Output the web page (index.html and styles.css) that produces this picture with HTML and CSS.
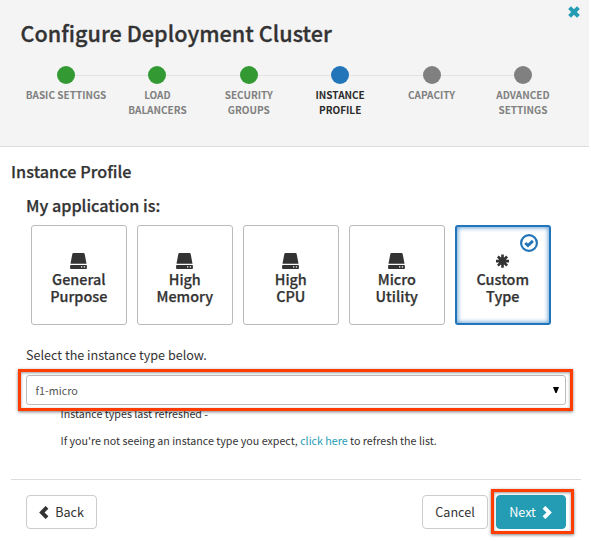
FILE: index.html
```html
<!DOCTYPE html>
<html lang="en">
<head>
<meta charset="utf-8">
<title>Configure Deployment Cluster</title>
<link rel="stylesheet" href="styles.css">
</head>
<body>
<svg class="defs" width="0" height="0" aria-hidden="true">
  <symbol id="hdd" viewBox="0 0 17 16">
    <path d="M3.3 0h10.4q.7 0 .9.7L16.5 10.800H.5L2.400.7Q2.600 0 3.300 0z"/>
    <path fill-rule="evenodd" d="M.9 12h15.200q.8 0 .8.8v2.400q0 .8-.8.8H.9q-.8 0-.8-.8v-2.400q0-.8.8-.8zM11 13.300v1.200h1.300v-1.200zM13.800 13.300v1.200h1.300v-1.200z"/>
  </symbol>
</svg>
<header class="header">
  <button class="close" aria-label="Close"><svg width="12" height="12" viewBox="0 0 12 12"><path d="M1.600 1.600l8.800 8.800M10.400 1.600l-8.800 8.800"/></svg></button>
  <h1 class="title">Configure Deployment Cluster</h1>
  <ol class="steps">
    <li class="step done">BASIC SETTINGS</li>
    <li class="step done">LOAD<br>BALANCERS</li>
    <li class="step done">SECURITY<br>GROUPS</li>
    <li class="step active">INSTANCE<br>PROFILE</li>
    <li class="step">CAPACITY</li>
    <li class="step">ADVANCED<br>SETTINGS</li>
  </ol>
</header>
<main class="content">
  <h2 class="heading">Instance Profile</h2>
  <section class="profile">
    <h3 class="question">My application is:</h3>
    <div class="cards">
      <div class="card"><svg class="icon"><use href="#hdd"/></svg><span>General<br>Purpose</span></div>
      <div class="card"><svg class="icon"><use href="#hdd"/></svg><span>High<br>Memory</span></div>
      <div class="card"><svg class="icon"><use href="#hdd"/></svg><span>High<br>CPU</span></div>
      <div class="card"><svg class="icon"><use href="#hdd"/></svg><span>Micro<br>Utility</span></div>
      <div class="card selected">
        <svg class="check" viewBox="0 0 18 18"><circle cx="9" cy="9" r="7.900"/><path d="M5.300 9l2.700 2.500 4.900-4.600"/></svg>
        <svg class="icon" viewBox="0 0 17 16"><path class="spokes" d="M8.500 1.500v13.200M2 8.100h13M3.900 3.500l9.200 9.200M13.100 3.500l-9.200 9.200"/><circle cx="8.500" cy="8.100" r="3.800"/></svg>
        <span>Custom<br>Type</span>
      </div>
    </div>
    <p class="prompt">Select the instance type below.</p>
    <div class="select highlighted"><span>f1-micro</span><svg width="6" height="6" viewBox="0 0 6 6"><path d="M0 0h6L3.600 6H2.400z"/></svg></div>
    <p class="note refreshed">Instance types last refreshed -</p>
    <p class="note">If you're not seeing an instance type you expect, <a>click here</a> to refresh the list.</p>
  </section>
  <footer class="footer">
    <button class="btn back"><svg class="chevron" viewBox="0 0 10 13"><path d="M8 1.300L2.900 6.500 8 11.700"/></svg><span>Back</span></button>
    <button class="btn cancel"><span>Cancel</span></button>
    <div class="highlighted next-wrap"><button class="btn next"><span>Next</span><svg class="chevron" viewBox="0 0 10 13"><path d="M2 1.300l5.100 5.200L2 11.700"/></svg></button></div>
  </footer>
</main>
</body>
</html>
```
FILE: styles.css
```css
* { box-sizing: border-box; }
body {
  margin: 0;
  min-height: 541px;
  background: #fff;
  color: #333;
  font-family: "Noto Sans CJK SC", "Noto Sans", sans-serif;
}
h1, h2, h3, p, ol { margin: 0; padding: 0; }
button { font-family: inherit; color: inherit; padding: 0; cursor: pointer; }
svg { display: block; flex: none; }
.defs { position: absolute; }

.header {
  position: relative;
  width: 589px;
  height: 147px;
  padding: 18px 0 0 20.500px;
  background: #f4f4f4;
  border-bottom: 1px solid #ddd;
}
.close {
  position: absolute;
  top: 6px;
  right: 9px;
  border: 0;
  background: none;
}
.close path { stroke: #239cb4; stroke-width: 4; }
.title { font-size: 21.600px; line-height: 30px; font-weight: 500; -webkit-text-stroke: .3px; letter-spacing: .03px; }
.steps { display: flex; list-style: none; margin: 18px 0 0 -.2px; }
.step {
  position: relative;
  width: 91.400px;
  text-align: center;
  font-size: 10px;
  font-weight: 700;
  line-height: 15px;
  color: #808080;
  white-space: nowrap;
}
.step::before {
  content: "";
  display: block;
  position: relative;
  z-index: 1;
  width: 18px;
  height: 18px;
  margin: 0 auto 3px;
  border-radius: 50%;
  background: #808080;
}
.step:not(:last-child)::after {
  content: "";
  position: absolute;
  top: 9px;
  left: 50%;
  width: 100%;
  height: 1px;
  background: #e2e2e2;
}
.step.done::before { background: #339933; }
.step.active { color: #2b2b2b; }
.step.active::before { background: #2275b9; }

.content { width: 581px; padding: 12px 0 0 11px; }
.heading { font-size: 16.200px; line-height: 24px; font-weight: 500; -webkit-text-stroke: .25px; letter-spacing: .05px; }
.profile { padding: 10px 0 0 15px; }
.question { font-size: 16.200px; line-height: 24px; font-weight: 500; -webkit-text-stroke: .25px; }
.cards { display: flex; gap: 10px; margin: 8px 0 0 5px; }
.card {
  position: relative;
  width: 96px;
  height: 100px;
  padding: 27px .5px 0 0;
  border: 1px solid #bbb;
  border-radius: 3px;
  text-align: center;
  font-size: 14.400px;
  font-weight: 500;
  line-height: 17px;
}
.card span { display: block; margin-top: 1px; -webkit-text-stroke: .25px; }
.icon { width: 17px; height: 16px; margin: 0 auto; fill: #333; }
.spokes { stroke: #333; stroke-width: 2.600; }
.selected { border: 2px solid #2275b9; padding-top: 26px; box-shadow: inset 0 0 4px 1px #6aa5d6; }
.check { position: absolute; top: 7px; right: 11px; width: 18px; height: 18px; fill: none; stroke: #2275b9; }
.check circle { stroke-width: 2.200; }
.check path { stroke-width: 3; }

.prompt { margin-top: 20px; font-size: 12.600px; line-height: 20px; }
.highlighted { position: relative; }
.highlighted::after {
  content: "";
  position: absolute;
  z-index: 2;
  inset: -7px -8px -7px -9px;
  border: 3px solid #ff3d00;
  box-shadow: 0 1px 3px rgba(0,0,0,.5), inset 0 1px 3px rgba(0,0,0,.4);
  pointer-events: none;
}
.select {
  display: flex;
  align-items: center;
  justify-content: space-between;
  width: 540px;
  height: 30px;
  margin-top: 10px;
  padding: 0 6px 0 8.500px;
  border: 1px solid #bbb;
  border-radius: 3px;
  font-size: 10.800px;
  line-height: 16px;
  color: #555;
}
.select svg { fill: #000; }
.note { margin: 9px 0 0 34.500px; font-size: 10.700px; line-height: 18px; white-space: nowrap; }
.refreshed { margin-top: 0; }
.note a { color: #239cb4; }

.footer {
  display: flex;
  margin-top: 29px;
  padding: 15px 15px 0;
  border-top: 1px solid #ddd;
}
.btn {
  display: flex;
  align-items: center;
  justify-content: center;
  gap: 6px;
  height: 34px;
  border: 1px solid #ccc;
  border-radius: 4px;
  background: #fff;
  font-size: 12.600px;
  line-height: 20px;
}
.back { width: 71px; }
.cancel { width: 66px; margin-left: auto; }
.next-wrap { margin-left: 8px; }
.next-wrap::after { inset: -6px -8px -5px -5px; }
.next { width: 70px; padding-right: 1px; color: #fff; background: #239cb4; border-color: #239cb4; }
.chevron { width: 10px; height: 13px; fill: none; stroke: currentColor; stroke-width: 3.900; }
```
